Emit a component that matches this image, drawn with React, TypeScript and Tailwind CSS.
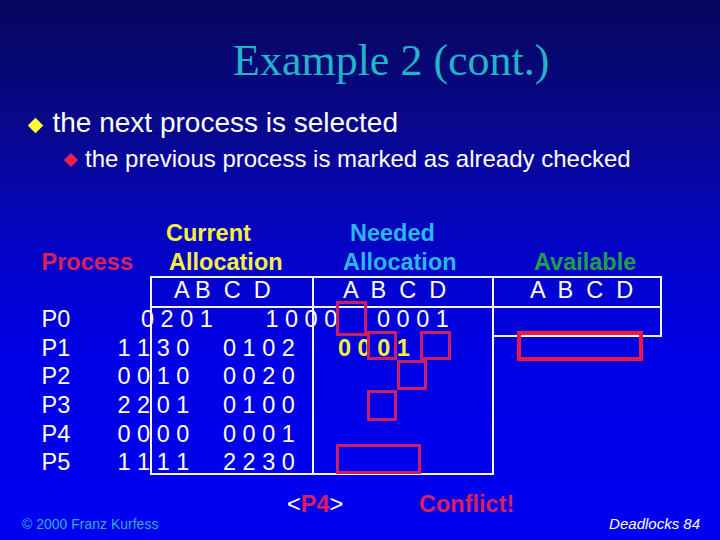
import React from "react";

const rowH = "h-[28.7px] leading-[28.7px]";

function NumRow({
  label,
  a,
  b,
  c,
  aPad = "pl-0",
  bPad = "pl-0",
  cPad = "pl-0",
  cClass = "",
}: {
  label: string;
  a: string;
  b: string;
  c?: string;
  aPad?: string;
  bPad?: string;
  cPad?: string;
  cClass?: string;
}) {
  return (
    <div className={`flex ${rowH} text-[23.5px] text-white whitespace-pre`}>
      <span className="w-[76px] shrink-0">{label}</span>
      <span className={`w-[105.5px] shrink-0 ${aPad}`}>{a}</span>
      <span className={`w-[115px] shrink-0 ${bPad}`}>{b}</span>
      {c ? <span className={`shrink-0 ${cPad} ${cClass}`}>{c}</span> : null}
    </div>
  );
}

export default function App() {
  return (
    <div className="relative w-[720px] h-[540px] overflow-hidden bg-[linear-gradient(to_bottom,#06065c_0%,#08088a_22%,#0404c4_45%,#0000e4_65%,#0000f2_100%)] font-['Liberation_Sans',Arial,sans-serif]">
      <div className="pt-[39px]">
        <h1 className="pl-[233px] text-[44px] leading-[44px] text-[#22b4c8] font-['Liberation_Serif','Times_New_Roman',serif] whitespace-pre">
          Example 2 (cont.)
        </h1>

        <div className="mt-[24.3px] flex items-start h-[32px]">
          <div className="ml-[29.5px] mt-[12.7px] w-[11px] h-[11px] rotate-45 bg-[#ffff33] shrink-0" />
          <span className="ml-[12px] text-[28px] leading-[32px] text-white">
            the next process is selected
          </span>
        </div>

        <div className="mt-[5.4px] flex items-start h-[28px]">
          <div className="ml-[65.5px] mt-[10.8px] w-[10px] h-[10px] rotate-45 bg-[#f0204a] shrink-0" />
          <span className="ml-[9.5px] text-[24px] leading-[28px] text-white">
            the previous process is marked as already checked
          </span>
        </div>

        {/* table */}
        <div className="relative mt-[46.3px] pl-[41.5px]">
          {/* header rows */}
          <div className={`flex ${rowH} text-[23.5px] font-bold whitespace-pre`}>
            <span className="ml-[124.5px] w-[184px] shrink-0 text-[#f4f040]">Current</span>
            <span className="text-[#2cb6ea]">Needed</span>
          </div>
          <div className={`flex ${rowH} text-[23.5px] font-bold whitespace-pre`}>
            <span className="w-[127.5px] shrink-0 text-[#d8205c]">Process</span>
            <span className="w-[174px] shrink-0 text-[#f4f040]">Allocation</span>
            <span className="w-[191px] shrink-0 text-[#2cb6ea]">Allocation</span>
            <span className="text-[#1ea048]">Available</span>
          </div>
          <div className={`flex ${rowH} text-[23.5px] text-white whitespace-pre`}>
            <span className="ml-[132.5px] w-[169px] shrink-0">A B  C  D</span>
            <span className="w-[187px] shrink-0">A  B  C  D</span>
            <span>A  B  C  D</span>
          </div>

          <NumRow label="P0" a="0 2 0 1" aPad="pl-[23.5px]" b="1 0 0 0" bPad="pl-[42.4px]" c="0 0 0 1" cPad="pl-[39px]" />
          <NumRow label="P1" a="1 1 3 0" b="0 1 0 2" c="0 0 0 1" cClass="font-bold text-[#f4f040]" />
          <NumRow label="P2" a="0 0 1 0" b="0 0 2 0" />
          <NumRow label="P3" a="2 2 0 1" b="0 1 0 0" />
          <NumRow label="P4" a="0 0 0 0" b="0 0 0 1" />
          <NumRow label="P5" a="1 1 1 1" b="2 2 3 0" />

          {/* white table lines (overlay) */}
          <div className="absolute left-[150px] top-[57px] w-[344px] h-[199px] border-2 border-[#f4f4f4]" />
          <div className="absolute left-[312px] top-[57px] w-[2px] h-[199px] bg-[#f4f4f4]" />
          <div className="absolute left-[492px] top-[57px] w-[170px] h-[61px] border-2 border-[#f4f4f4]" />
          <div className="absolute left-[150px] top-[87px] w-[512px] h-[2px] bg-[#f4f4f4]" />

          {/* red marker boxes (overlay) */}
          <div className="absolute left-[336px] top-[82px] w-[31px] h-[35px] border-[3px] border-[#cc1e62]" />
          <div className="absolute left-[367px] top-[112px] w-[30px] h-[29px] border-[3px] border-[#cc1e62]" />
          <div className="absolute left-[420px] top-[112px] w-[31px] h-[29px] border-[3px] border-[#cc1e62]" />
          <div className="absolute left-[396.5px] top-[141px] w-[30px] h-[30px] border-[3px] border-[#cc1e62]" />
          <div className="absolute left-[367px] top-[171px] w-[30px] h-[31px] border-[3px] border-[#cc1e62]" />
          <div className="absolute left-[336px] top-[225px] w-[85px] h-[30px] border-[3px] border-[#cc1e62]" />
          <div className="absolute left-[517px] top-[112px] w-[126px] h-[30px] border-[4px] border-[#f0183c]" />
        </div>

        {/* footer line 1 */}
        <div className="mt-[12.4px] flex h-[28px] text-[23.5px] leading-[28px] whitespace-pre">
          <span className="ml-[287px] w-[132px] shrink-0 text-white">
            &lt;<span className="font-bold text-[#d8205c]">P4</span>&gt;
          </span>
          <span className="font-bold text-[#d8205c]">Conflict!</span>
        </div>

        {/* footer line 2 */}
        <div className="mt-[-3px] flex justify-between h-[18px] leading-[18px] px-[20px]">
          <span className="text-[14px] text-[#2eaed0] ml-[2px]">© 2000 Franz Kurfess</span>
          <span className="text-[15px] italic text-white">Deadlocks  84</span>
        </div>
      </div>
    </div>
  );
}
